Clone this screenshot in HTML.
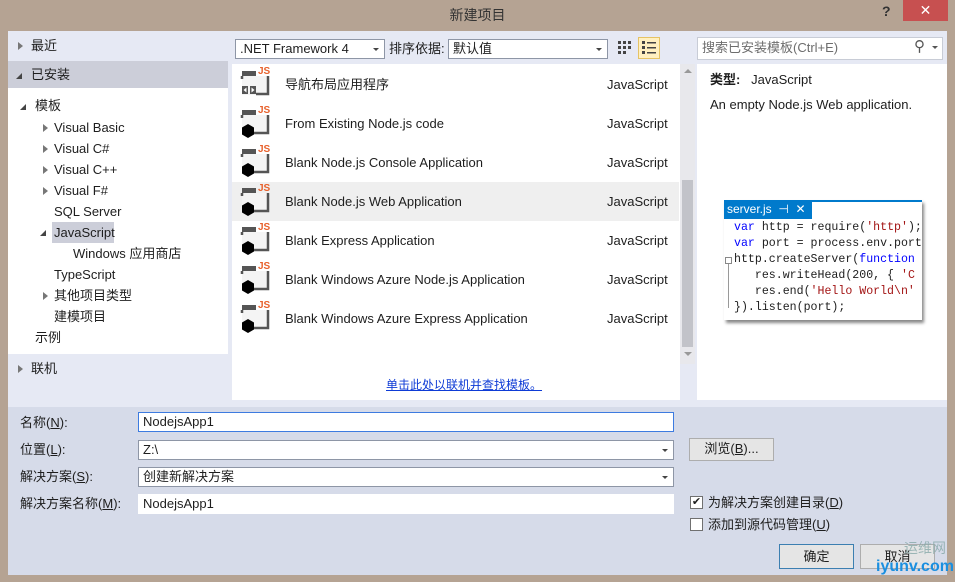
<!DOCTYPE html>
<html><head><meta charset="utf-8">
<style>
*{margin:0;padding:0;box-sizing:border-box}
body{width:955px;height:582px;background:#b5a393;font-family:"Segoe UI","Liberation Sans","Noto Sans CJK SC",sans-serif;font-size:13px;color:#1e1e1e;position:relative;overflow:hidden}
.a{position:absolute;white-space:nowrap;line-height:17px}
.tri{position:absolute;width:0;height:0;border-top:4px solid transparent;border-bottom:4px solid transparent;border-left:5px solid #777}
.tri2{position:absolute;width:0;height:0;border-left:6px solid transparent;border-bottom:6px solid #444}
.inp{position:absolute;background:#fff;border:1px solid #8e96a6;height:20px;padding:1px 4px;font-size:13px;line-height:16px}
.dd:after{content:"";position:absolute;right:5px;top:8px;border-left:3px solid transparent;border-right:3px solid transparent;border-top:3px solid #444}
.row{position:absolute;left:232px;width:447px;height:39px}
.row .t{position:absolute;left:53px;top:11px;line-height:17px}
.row .j{position:absolute;left:375px;top:11px;line-height:17px}
.btn{position:absolute;background:#e5e5e5;border:1px solid #adadad;text-align:center;font-size:13px;line-height:20px}
.code{font-family:"Liberation Mono",monospace;font-size:11.6px;line-height:16px}
.kw{color:#0000ff}.st{color:#a31515}
</style></head><body>
<div class="a" style="left:0;top:0;width:955px;height:31px;text-align:center;line-height:31px;font-size:14px;color:#333">新建项目</div>
<div class="a" style="left:882px;top:3px;font-weight:bold;font-size:14px;color:#333">?</div>
<div class="a" style="left:903px;top:0;width:45px;height:21px;background:#c75050;color:#fff;text-align:center;line-height:20px;font-size:14px">✕</div>

<div class="a" style="left:8px;top:31px;width:939px;height:544px;background:#e6e9f4"></div>
<!-- left panel -->
<div class="tri" style="left:18px;top:42px"></div>
<div class="a" style="left:31px;top:37px">最近</div>
<div class="a" style="left:8px;top:61px;width:220px;height:27px;background:#ccced9"></div>
<div class="tri2" style="left:16px;top:73px"></div>
<div class="a" style="left:31px;top:66px">已安装</div>
<div class="a" style="left:8px;top:88px;width:220px;height:266px;background:#fff"></div>
<div class="tri2" style="left:20px;top:104px"></div>
<div class="a" style="left:35px;top:97px">模板</div>
<div class="tri" style="left:43px;top:124px"></div><div class="a" style="left:54px;top:119px">Visual Basic</div>
<div class="tri" style="left:43px;top:145px"></div><div class="a" style="left:54px;top:140px">Visual C#</div>
<div class="tri" style="left:43px;top:166px"></div><div class="a" style="left:54px;top:161px">Visual C++</div>
<div class="tri" style="left:43px;top:187px"></div><div class="a" style="left:54px;top:182px">Visual F#</div>
<div class="a" style="left:54px;top:203px">SQL Server</div>
<div class="a" style="left:52px;top:222px;width:62px;height:21px;background:#ccced9"></div>
<div class="tri2" style="left:40px;top:230px"></div>
<div class="a" style="left:54px;top:224px">JavaScript</div>
<div class="a" style="left:73px;top:245px">Windows 应用商店</div>
<div class="a" style="left:54px;top:266px">TypeScript</div>
<div class="tri" style="left:43px;top:292px"></div><div class="a" style="left:54px;top:287px">其他项目类型</div>
<div class="a" style="left:54px;top:308px">建模项目</div>
<div class="a" style="left:35px;top:329px">示例</div>
<div class="tri" style="left:18px;top:365px"></div>
<div class="a" style="left:31px;top:360px">联机</div>

<!-- top toolbar -->
<div class="inp dd" style="left:235px;top:39px;width:150px">.NET Framework 4</div>
<div class="a" style="left:389px;top:40px">排序依据:</div>
<div class="inp dd" style="left:448px;top:39px;width:160px">默认值</div>
<svg class="a" style="left:617px;top:40px" width="16" height="16"><g fill="#444"><rect x="1" y="1" width="3" height="3"/><rect x="6" y="1" width="3" height="3"/><rect x="11" y="1" width="3" height="3"/><rect x="1" y="6" width="3" height="3"/><rect x="6" y="6" width="3" height="3"/><rect x="11" y="6" width="3" height="3"/><rect x="1" y="11" width="3" height="3"/><rect x="6" y="11" width="3" height="3"/></g></svg>
<div class="a" style="left:638px;top:37px;width:22px;height:22px;background:#fff0c0;border:1px solid #e5c365"></div>
<svg class="a" style="left:641px;top:40px" width="16" height="16"><g fill="#444"><rect x="1" y="1" width="3" height="3"/><rect x="6" y="2" width="9" height="1.5"/><rect x="1" y="6" width="3" height="3"/><rect x="6" y="7" width="9" height="1.5"/><rect x="1" y="11" width="3" height="3"/><rect x="6" y="12" width="9" height="1.5"/></g></svg>
<div class="inp" style="left:697px;top:37px;width:246px;height:23px;border-color:#c8ccd6;color:#6d6d6d;line-height:18px">搜索已安装模板(Ctrl+E)</div>
<div class="a" style="left:914px;top:38px;font-size:15px;color:#555">⚲</div>
<div class="a" style="left:932px;top:46px;border-left:3px solid transparent;border-right:3px solid transparent;border-top:3px solid #555"></div>

<!-- middle list -->
<div class="a" style="left:232px;top:64px;width:448px;height:336px;background:#fff"></div>
<div class="a" style="left:680px;top:64px;width:15px;height:300px;background:#e8e8ec"></div>
<div class="a" style="left:682px;top:180px;width:11px;height:167px;background:#c2c3c9"></div>
<div class="a" style="left:684px;top:69px;border-left:4px solid transparent;border-right:4px solid transparent;border-bottom:4px solid #999"></div>
<div class="a" style="left:684px;top:352px;border-left:4px solid transparent;border-right:4px solid transparent;border-top:4px solid #999"></div>

<div class="row" style="top:182px;background:#efefef"></div>
<svg class="a" style="left:240px;top:65px" width="36" height="275">
<defs>
<g id="ib"><rect x="2" y="6" width="14" height="5" fill="#555"/><rect x="2" y="11" width="27" height="19" fill="#f4f4f4"/><path d="M2 11V14M28 11V29H10" stroke="#555" stroke-width="2.5" fill="none"/><text x="18" y="9" font-family="Liberation Sans" font-weight="bold" font-size="10" fill="#e8612c">JS</text></g>
<polygon id="hx" points="8,20 14,23.5 14,30.5 8,34 2,30.5 2,23.5" fill="#000"/>
</defs>
<g><rect x="2" y="6" width="14" height="5" fill="#555"/><rect x="2" y="11" width="27" height="19" fill="#f4f4f4"/><path d="M2 11V14M28 11V29H16" stroke="#555" stroke-width="2.5" fill="none"/><text x="18" y="9" font-family="Liberation Sans" font-weight="bold" font-size="10" fill="#e8612c">JS</text><rect x="2" y="21" width="6" height="8" fill="#555"/><rect x="10" y="21" width="6" height="8" fill="#555"/><path d="M6.5 22.5L3.5 25L6.5 27.5Z M11.5 22.5L14.5 25L11.5 27.5Z" fill="#fff"/></g>
<g transform="translate(0,39)"><use href="#ib"/><use href="#hx"/></g>
<g transform="translate(0,78)"><use href="#ib"/><use href="#hx"/></g>
<g transform="translate(0,117)"><use href="#ib"/><use href="#hx"/></g>
<g transform="translate(0,156)"><use href="#ib"/><use href="#hx"/></g>
<g transform="translate(0,195)"><use href="#ib"/><use href="#hx"/></g>
<g transform="translate(0,234)"><use href="#ib"/><use href="#hx"/></g>
</svg>
<div class="row" style="top:65px"><span class="t">导航布局应用程序</span><span class="j">JavaScript</span></div>
<div class="row" style="top:104px"><span class="t">From Existing Node.js code</span><span class="j">JavaScript</span></div>
<div class="row" style="top:143px"><span class="t">Blank Node.js Console Application</span><span class="j">JavaScript</span></div>
<div class="row" style="top:182px"><span class="t">Blank Node.js Web Application</span><span class="j">JavaScript</span></div>
<div class="row" style="top:221px"><span class="t">Blank Express Application</span><span class="j">JavaScript</span></div>
<div class="row" style="top:260px"><span class="t">Blank Windows Azure Node.js Application</span><span class="j">JavaScript</span></div>
<div class="row" style="top:299px"><span class="t">Blank Windows Azure Express Application</span><span class="j">JavaScript</span></div>
<div class="a" style="left:386px;top:377px;color:#0e3bd6;text-decoration:underline;font-size:12px">单击此处以联机并查找模板。</div>

<!-- right panel -->
<div class="a" style="left:697px;top:64px;width:250px;height:336px;background:#fff"></div>
<div class="a" style="left:710px;top:71px"><b>类型:</b>&nbsp;&nbsp; JavaScript</div>
<div class="a" style="left:710px;top:96px">An empty Node.js Web application.</div>
<div class="a" style="left:724px;top:200px;width:198px;height:120px;background:#fff;box-shadow:2px 3px 3px #888;overflow:hidden">
<div class="a" style="left:0;top:0;width:200px;height:2px;background:#007acc"></div>
<div class="a" style="left:0;top:0;width:88px;height:19px;background:#007acc;color:#fff;font-size:12px;line-height:19px;padding-left:3px">server.js &nbsp;⊣ &nbsp;✕</div>
<div class="a code" style="left:10px;top:20px;line-height:16px">
<div><span class="kw">var</span> http = require(<span class="st">'http'</span>);</div>
<div><span class="kw">var</span> port = process.env.port</div>
<div>http.createServer(<span class="kw">function</span></div>
<div>&nbsp;&nbsp;&nbsp;res.writeHead(200, { <span class="st">'C</span></div>
<div>&nbsp;&nbsp;&nbsp;res.end(<span class="st">'Hello World\n'</span></div>
<div>}).listen(port);</div></div>
<div class="a" style="left:1px;top:57px;width:7px;height:7px;border:1px solid #888"></div>
<div class="a" style="left:4px;top:64px;width:1px;height:44px;background:#999"></div>
</div>

<!-- bottom -->
<div class="a" style="left:8px;top:407px;width:939px;height:168px;background:#d6dbe9"></div>
<div class="a" style="left:20px;top:414px">名称(<u>N</u>):</div>
<div class="inp" style="left:138px;top:412px;width:536px;border-color:#3d7be0">NodejsApp1</div>
<div class="a" style="left:20px;top:441px">位置(<u>L</u>):</div>
<div class="inp dd" style="left:138px;top:440px;width:536px">Z:\</div>
<div class="a" style="left:20px;top:468px">解决方案(<u>S</u>):</div>
<div class="inp dd" style="left:138px;top:467px;width:536px">创建新解决方案</div>
<div class="a" style="left:20px;top:495px">解决方案名称(<u>M</u>):</div>
<div class="inp" style="left:138px;top:494px;width:536px;border-color:#fff">NodejsApp1</div>
<div class="btn" style="left:689px;top:438px;width:85px;height:23px">浏览(<u>B</u>)...</div>
<div class="a" style="left:690px;top:496px;width:13px;height:13px;background:#fff;border:1px solid #707070;font-size:11px;line-height:11px;text-align:center">✔</div>
<div class="a" style="left:708px;top:494px">为解决方案创建目录(<u>D</u>)</div>
<div class="a" style="left:690px;top:518px;width:13px;height:13px;background:#fff;border:1px solid #707070"></div>
<div class="a" style="left:708px;top:516px">添加到源代码管理(<u>U</u>)</div>
<div class="btn" style="left:779px;top:544px;width:75px;height:25px;border-color:#3c7fb1;line-height:23px">确定</div>
<div class="btn" style="left:860px;top:544px;width:75px;height:25px;line-height:23px">取消</div>
<div class="a" style="left:904px;top:540px;font-size:14px;color:#8aa;opacity:.8">运维网</div>
<div class="a" style="left:876px;top:558px;font-size:16px;font-weight:bold;color:#1a8fe0">iyunv.com</div>
</body></html>
